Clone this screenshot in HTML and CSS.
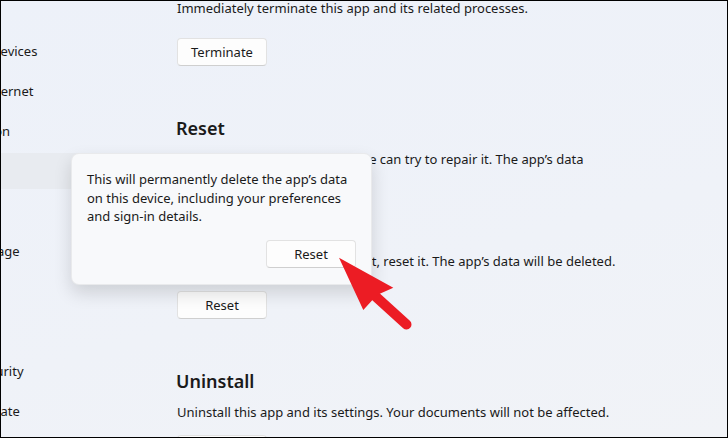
FILE: index.html
```html
<!DOCTYPE html>
<html lang="en">
<head>
    <meta charset="UTF-8">
    <title>Settings - Apps - Advanced options</title>
    <link rel="stylesheet" href="styles.css">
</head>
<body>
    <div class="window">
        <nav class="sidebar">
            <ul class="nav-list">
                <li>System</li>
                <li>Bluetooth &amp; devices</li>
                <li>Network &amp; internet</li>
                <li>Personalization</li>
                <li class="active">Apps</li>
                <li>Accounts</li>
                <li>Time &amp; language</li>
                <li>Gaming</li>
                <li>Accessibility</li>
                <li>Privacy &amp; security</li>
                <li>Windows Update</li>
            </ul>
        </nav>

        <main class="content">
            <p class="desc top">Immediately terminate this app and its related processes.</p>
            <button class="btn">Terminate</button>

            <h2 class="section-title">Reset</h2>
            <p class="desc">If this app isn’t working right, we can try to repair it. The app’s data won’t be affected.</p>
            <button class="btn">Repair</button>
            <p class="desc follow">If this app still isn’t working right, reset it. The app’s data will be deleted.</p>
            <button class="btn">Reset</button>

            <h2 class="section-title">Uninstall</h2>
            <p class="desc">Uninstall this app and its settings. Your documents will not be affected.</p>
            <button class="btn last">Uninstall</button>
        </main>

        <!-- confirmation flyout of the Reset button -->
        <div class="flyout">
            <p>This will permanently delete the app’s data on this device, including your preferences and sign-in details.</p>
            <div class="flyout-actions">
                <button class="btn">Reset</button>
            </div>
        </div>

        <!-- red pointer arrow -->
        <svg class="pointer" width="90" height="90" viewBox="0 0 90 90">
            <line x1="44" y1="50" x2="76.5" y2="79.5" stroke="#ec1c24" stroke-width="10" stroke-linecap="round"/>
            <polygon points="9,12.7 63.3,42.7 47,50 33.3,65" fill="#ec1c24"/>
        </svg>
    </div>
</body>
</html>
```

FILE: styles.css
```css
body {
    margin: 0;
    font-family: "Noto Sans", "Segoe UI", sans-serif;
}
.window {
    position: relative;
    width: 728px;
    height: 438px;
    box-sizing: border-box;
    border: 1px solid #000;
    overflow: hidden;
    display: grid;
    grid-template-columns: 135px 1fr;
    background: linear-gradient(165deg, #edf1f9 0%, #eff2f8 60%, #f1f3f7 100%);
    color: #1a1a1a;
    font-size: 13px;
}
.sidebar {
    overflow: hidden;
}
.nav-list {
    list-style: none;
    margin: -8px 0 0 -89px;
    padding: 0;
    display: flex;
    flex-direction: column;
    gap: 4px;
}
.nav-list li {
    height: 36px;
    line-height: 36px;
    padding-left: 4px;
    white-space: nowrap;
    border-radius: 4px;
}
.nav-list li.active {
    background-color: #e8ebf0;
}
.content {
    padding-left: 41px;
}
.desc {
    margin: 8px 0 0;
    line-height: 19px;
    max-width: 440px;
}
.desc.top {
    margin-top: -2px;
}
.desc.follow {
    margin-top: 16px;
}
.section-title {
    margin: 48px 0 0 -1px;
    font-size: 18px;
    font-weight: 600;
    line-height: 28px;
}
.btn {
    display: block;
    box-sizing: border-box;
    height: 28px;
    min-width: 90px;
    padding: 0 12px;
    margin-top: 20px;
    font-family: inherit;
    font-size: 13px;
    color: #1a1a1a;
    background-color: #fdfdfd;
    border: 1px solid #e2e2e2;
    border-bottom-color: #cfcfcf;
    border-radius: 4px;
}
.btn.last {
    margin-top: 13px;
}
.flyout {
    position: absolute;
    left: 70px;
    top: 152px;
    width: 301px;
    box-sizing: border-box;
    padding: 16px 15px 16px 15px;
    background-color: #f8f9fb;
    border: 1px solid rgba(0, 0, 0, 0.06);
    border-radius: 8px;
    box-shadow: 0 8px 18px rgba(0, 0, 0, 0.14);
    line-height: 18.5px;
}
.flyout p {
    margin: 0;
}
.flyout-actions {
    display: flex;
    justify-content: flex-end;
    margin-top: 14px;
}
.flyout-actions .btn {
    margin-top: 0;
}
.pointer {
    position: absolute;
    left: 329px;
    top: 244px;
}
```
